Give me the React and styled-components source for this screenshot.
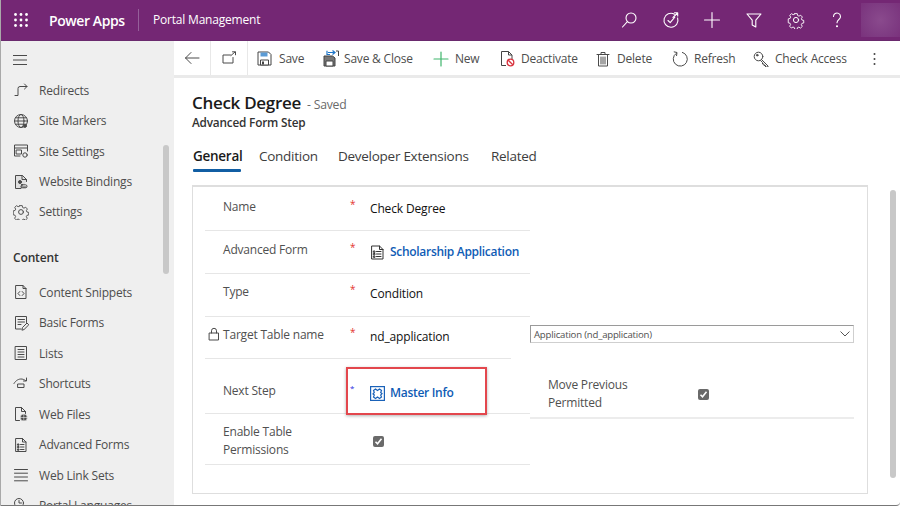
import React from "react";
import styled, { createGlobalStyle } from "styled-components";

const Global = createGlobalStyle`
  * { box-sizing: border-box; }
  html, body { margin: 0; padding: 0; background: #fff; overflow: hidden; }
  body { font-family: "Open Sans", "Liberation Sans", sans-serif; }
`;

const Page = styled.div`
  width: 900px; height: 506px; overflow: hidden; display: flex; flex-direction: column;
  border-left: 1px solid #a9a9a9; border-bottom: 1px solid #777; border-bottom-right-radius: 4px;
`;
const TopBar = styled.header`
  height: 41px; flex: none; background: #742774; color: #fff; display: flex; align-items: center;
  margin-left: -1px; border-bottom: 1px solid #6a2a6e;
`;
const Waffle = styled.div`width: 49px; padding-left: 14px; display: flex; align-items: center;`;
const Brand = styled.div`
  width: 89px; font-size: 14px; font-weight: 600; letter-spacing: -0.42px; white-space: nowrap;
`;
const AppName = styled.div`
  border-left: 1px solid #95609a; height: 22px; line-height: 22px; padding-left: 14px; font-size: 12px; letter-spacing: -0.2px;
  white-space: nowrap; flex: 1;
`;
const TopIcons = styled.div`display: flex; align-items: center;`;
const TopIcon = styled.div`width: 41.6px; height: 41px; display: flex; align-items: center; justify-content: center;`;
const Avatar = styled.div`
  width: 39px; height: 34px; margin-left: 3px;
  background: radial-gradient(circle at 50% 50%, #8a4a8d 0%, #7f3c83 60%, #7a327c 100%);
`;
const Body = styled.div`flex: 1; display: flex; min-height: 0;`;

const Sidebar = styled.nav`
  width: 173px; flex: none; background: #efefef; position: relative; overflow: hidden; padding-left: 12px;
`;
const Burger = styled.div`height: 34px; display: flex; align-items: center; padding-top: 4px;`;
const NavGroup = styled.div`padding-top: ${p => p.$top ?? 0}px;`;
const NavItem = styled.div`
  height: 30.45px; display: flex; align-items: center; gap: 10px; font-size: 12px; letter-spacing: -0.2px; color: #4d4d4d; white-space: nowrap;
`;
const NavIcon = styled.span`width: 16px; height: 16px; flex: none; display: flex;`;
const NavHead = styled.div`
  height: 31px; margin-top: 15px; display: flex; align-items: center; font-size: 12px; font-weight: 600; letter-spacing: -0.15px; color: #333;
`;
const Thumb = styled.div`
  position: absolute; left: 162px; top: 104px; width: 6px; height: 129px; border-radius: 3px; background: #c8c8c8;
`;

const Main = styled.main`flex: 1; min-width: 0; display: flex; flex-direction: column;`;
const Toolbar = styled.div`
  height: 37px; flex: none; border-bottom: 3px solid #eaeaea; display: flex; align-items: center; background: #fff; color: #4d4d4d; font-size: 12px; letter-spacing: -0.2px;
`;
const NavBtn = styled.div`
  width: ${p => p.$w}px; height: 34px; flex: none; display: flex; align-items: center; justify-content: center; border-right: 1px solid #e8e8e8;
`;
const ToolBtn = styled.div`
  width: ${p => p.$w}px; flex: none; display: flex; align-items: center; gap: ${p => p.$gap ?? 6}px; white-space: nowrap; padding-top: 1px;
`;
const Content = styled.div`flex: 1; min-height: 0; display: flex; position: relative;`;
const FormArea = styled.div`flex: 1; min-width: 0; padding: 12px 0 0 18px;`;
const Title = styled.div`display: flex; align-items: baseline; gap: 6px; height: 24px;`;
const TitleText = styled.h1`margin: 0; font-size: 17px; line-height: 25px; font-weight: 600; letter-spacing: -0.3px; color: #1a1a1a;`;
const Saved = styled.span`font-size: 12.2px; color: #6a6a6a; letter-spacing: -0.2px;`;
const SubTitle = styled.div`font-size: 11.8px; line-height: 16px; font-weight: 600; letter-spacing: -0.2px; color: #333;`;
const Tabs = styled.div`display: flex; margin-top: 16px; height: 39px; padding-left: 1px;`;
const Tab = styled.div`
  width: ${p => p.$w}px; font-size: 13.5px; line-height: 20px; letter-spacing: -0.27px; color: ${p => p.$active ? "#1a1a1a" : "#3d3d3d"}; font-weight: ${p => p.$active ? 600 : 400}; white-space: nowrap; position: relative;
  ${p => p.$active && `&::after { content: ""; position: absolute; left: 0; top: 23px; width: 48px; height: 3px; background: #115ea3; border-radius: 1px; }`}
`;
const Card = styled.section`
  width: 676px; height: 309px; border: 1px solid #dedede; border-top-width: 2px; padding: 0 12px; display: flex; background: #fff; position: relative;
`;
const LeftCol = styled.div`width: 325px; flex: none;`;
const RightCol = styled.div`flex: 1; padding-top: 138px;`;
const Row = styled.div`
  height: ${p => p.$h}px; width: ${p => p.$line ?? 325}px; border-bottom: 1px solid #e6e6e6; display: grid; grid-template-columns: 145px 20px 1fr; align-items: start; padding-top: ${p => p.$top}px; position: relative;
`;
const Label = styled.div`
  padding-left: 18px; font-size: 12px; line-height: 18px; letter-spacing: -0.2px; color: #505050;
`;
const Req = styled.div`
  font-size: ${p => p.$blue ? 8 : 10}px; line-height: 12px; color: ${p => p.$blue ? "#2a2ae0" : "#e3342f"};
`;
const Value = styled.div`
  font-size: 12px; line-height: 18px; margin-top: 2px; letter-spacing: -0.15px; color: #111; font-weight: 500; white-space: nowrap;
`;
const LinkValue = styled(Value)`display: flex; align-items: center; gap: 5px; color: #0f5cb5; font-weight: 600; letter-spacing: -0.3px;`;
const LockWrap = styled.span`position: absolute; left: 3px; top: 10px; display: flex;`;
const CheckBox = styled.span`
  width: 11px; height: 11px; display: flex; align-items: center; justify-content: center; background: #6a6a6a; border-radius: 2px; margin-top: ${p => p.$mt ?? 0}px; margin-left: ${p => p.$ml ?? 0}px;
`;
const Select = styled.div`
  height: 18px; width: 324px; border: 1px solid #cfcfcf; border-top-color: #9a9a9a; border-left-color: #9a9a9a; display: flex; align-items: center; justify-content: space-between; padding: 0 3px 0 3px; font-size: 9.6px; letter-spacing: -0.2px; color: #505050;
`;
const MoveRow = styled.div`
  margin-top: 33px; height: 43px; width: 324px; border-bottom: 2px solid #ececec; display: grid; grid-template-columns: 150px 1fr; padding-left: 18px; align-items: start; position: relative;
`;
const MoveLabel = styled(Label)`padding-left: 0;`;
const Highlight = styled.div`
  position: absolute; left: 141px; top: 8px; width: 141px; height: 48px; border: 2px solid #e3474d; box-shadow: 0 1px 3px rgba(0,0,0,.3); pointer-events: none;
`;
const Track = styled.div`width: 10px; flex: none; padding-top: 112px;`;
const Bar = styled.div`width: 6px; height: 288px; background: #c8c8c8; border-radius: 3px;`;

const Ic = ({ size = 16, w, h, vb, color = "#4a4a4a", sw = 1, children }) => (
  <svg width={w ?? size} height={h ?? size} viewBox={vb ?? `0 0 ${size} ${size}`} fill="none" stroke={color} strokeWidth={sw} strokeLinecap="round" strokeLinejoin="round">{children}</svg>
);

const WaffleIcon = () => (
  <svg width="14" height="14" viewBox="0 0 14 14" fill="#fff">
    {[1.5, 7, 12.5].flatMap(y => [1.5, 7, 12.5].map(x => <circle key={`${x}-${y}`} cx={x} cy={y} r="1.4" />))}
  </svg>
);

const T = "#fff";
const gearPath = "M6.6.9h2.8l.4 2.1 1.5.7 1.9-1 1.9 2-1.100 1.800.6 1.500 2 .5v2.800l-2 .4-.7 1.500 1.100 1.900-2 1.900-1.800-1.100-1.500.6-.5 2H6.600l-.4-2-1.500-.7-1.900 1.100-1.900-2 1.100-1.800-.6-1.500-2-.5V6.700l2-.4.7-1.500-1.100-1.900 2-1.900 1.800 1.100 1.500-.6z";
const topIcons = [
  <Ic size={18} color={T} key="s" sw={1.1}><circle cx="11" cy="7" r="5" /><path d="M7.4 10.6 2.5 16" /></Ic>,
  <Ic size={18} color={T} key="a" sw={1.1}><path d="M12.5 3.2A7 7 0 1 0 15.6 7" /><path d="M6 9.5l2.2 2.2 4.6-5.6" /><path d="M11 6.5 15.5 2M12.5 1.8h3.2V5" /></Ic>,
  <Ic size={18} color={T} key="p" sw={1.1}><path d="M9 1.5v15M1.5 9h15" /></Ic>,
  <Ic size={18} color={T} key="f" sw={1.1}><path d="M2 3h14l-5.2 6.2V16l-3.6-2V9.2z" /></Ic>,
  <Ic size={18} color={T} key="g" sw={1}><circle cx="9" cy="9" r="2.6" /><path d={gearPath} transform="translate(1.800 1.800) scale(.9)" /></Ic>,
  <Ic size={18} color={T} key="h" sw={1.1}><path d="M5.5 5.5a3.5 3.5 0 1 1 5.6 2.8C9.8 9.3 9 10 9 11.8" /><circle cx="9" cy="15.2" r=".5" fill="#fff" /></Ic>,
];

const nav = {
  redirect: <Ic><path d="M2 13.500h3V6.500a2 2 0 0 1 2-2h7" /><path d="M11.500 2l2.500 2.500L11.500 7" /></Ic>,
  globe: <Ic><circle cx="8" cy="8" r="6.500" /><ellipse cx="8" cy="8" rx="3" ry="6.500" /><path d="M1.500 8h13M2.500 4.800h11M2.500 11.200h11" /><circle cx="12" cy="13" r="1.400" fill="#4a4a4a" /></Ic>,
  site: <Ic><path d="M7 13H1.500V2h13v6" /><path d="M1.500 5h13M3.500 7h5v4h-5z" /><circle cx="12" cy="12" r="2.200" /></Ic>,
  bind: <Ic><path d="M8 14.500H2.500v-13h7l4 4v2" fill="#e0e0e0" /><path d="M9 1.500v4h4.500" /><circle cx="7" cy="8" r="1.500" fill="#4a4a4a" /><path d="M8 13h5M8.500 10.800h4a1.500 1.500 0 0 1 0 3h-3a1.500 1.500 0 0 1 0-3z" /></Ic>,
  gear: <Ic><circle cx="8" cy="8" r="2.400" /><path d={gearPath} transform="translate(.8 .8) scale(.9)" /></Ic>,
  snippet: <Ic><path d="M3 1.500h7l3 3v10H3z" /><path d="M10 1.500v3h3M6.800 7.500 5 9.500l1.800 2M9.200 7.500l1.800 2-1.800 2" /></Ic>,
  basic: <Ic><path d="M8 14H2.500V1.500h11v6" /><path d="M5 4.500h6.500M5 7h6.500M5 9.500h3" /><path d="M9 14.800l.5-2.300 4.500-4.500 1.800 1.800-4.500 4.500z" /></Ic>,
  list: <Ic><rect x="2.500" y="1.500" width="11" height="13" /><path d="M5 4.500h6M5 7h6M5 9.500h6M5 12h6" /></Ic>,
  shortcut: <Ic><path d="M1 7.500C3 4 6 3 8 3c1.500 0 3 .4 4.500 1.500" /><path d="M13.500 2v3h-3" /><rect x="5" y="8" width="6" height="3.500" /></Ic>,
  webfile: <Ic><path d="M6.500 14.500h-4v-13h6l4 4v2" /><path d="M8.500 1.500v4h4" /><circle cx="10.800" cy="11.500" r="3.500" fill="#4a4a4a" stroke="#efefef" strokeWidth=".6" /><path d="M7.500 11.500h6.500M10.800 8v7" stroke="#efefef" strokeWidth=".6" /></Ic>,
  advanced: <Ic><path d="M3 1.500h6.500l3.500 3.500v9.500H3z" /><path d="M9.500 1.500V5H13" /><path d="M7.500 7.500h3.500M7.500 10h3.500M7.500 12.500h3.500" /><path d="M4.800 7h1.200v1.200H4.800zM4.800 9.500h1.200v1.200H4.800zM4.800 12h1.200v1.200H4.800z" fill="#4a4a4a" /></Ic>,
  links: <Ic><path d="M1.500 2.500h13M1.500 6.200h13M1.500 10h13M1.500 13.800h13" /></Ic>,
  lang: <Ic><circle cx="6" cy="6" r="4.500" /><path d="M6 3.500V6h2.500" /><path d="M9 12.500h5v2H9z" /></Ic>,
};

const NavRow = ({ icon, children }) => (
  <NavItem><NavIcon>{icon}</NavIcon>{children}</NavItem>
);

const ToolIcons = {
  back: <Ic><path d="M15 8H1.500M7 2.500 1.500 8 7 13.500" /></Ic>,
  popout: <Ic><path d="M12 7.500V13H2V5h7.500" /><path d="M10 5.500 14 2M11.500 1.800H14.500v3" /></Ic>,
  save: <svg width="15" height="15" viewBox="0 0 15 15"><path d="M1 1h10.500L14 3.500V14H1z" fill="#fff" stroke="#444" /><path d="M3.500 1.500h7v4h-7z" fill="#5b9bd5" /><path d="M3.500 9h8v5h-8z" fill="#fff" stroke="#444" /><path d="M5 10.500h2v3H5z" fill="#444" /></svg>,
  saveClose: <svg width="16" height="17" viewBox="0 0 16 17"><path d="M1 6h8.500L12 8v8H1z" fill="#777" stroke="#444" /><path d="M3 11h7v5H3z" fill="#fff" stroke="#444" /><path d="M5 2.500H12M9.500.500 12 2.500 9.500 4.500M7 4.500h-3V.800" fill="none" stroke="#1f77c9" strokeWidth="1.200" /><path d="M13 1h2.500v5" fill="none" stroke="#444" /></svg>,
  plus: <Ic color="#3fb56c" sw={1.2}><path d="M8 1v14M1 8h14" /></Ic>,
  deactivate: <svg width="15" height="17" viewBox="0 0 15 17" fill="none"><path d="M6 15.500H1.500v-14h7l3.500 3.500v4" stroke="#444" /><path d="M8.500 1.500V5H12" stroke="#444" /><circle cx="10.500" cy="12.500" r="3.300" stroke="#d9343f" strokeWidth="1.300" /><path d="M8.300 10.300l4.500 4.500" stroke="#d9343f" strokeWidth="1.300" /></svg>,
  trash: <Ic><path d="M3.500 4v11h9V4M2 3.500h12M6 3V1.500h4V3M6 6v7M8 6v7M10 6v7" /></Ic>,
  refresh: <svg width="16" height="16" viewBox="0 0 16 16" fill="none" stroke="#4a4a4a"><path d="M4.500 2.200A7 7 0 1 0 10 1.300" /><path d="M1.800.800 5 1.500 4.500 5" /></svg>,
  key: <Ic><circle cx="5.500" cy="5.500" r="4.300" /><circle cx="4.200" cy="4.200" r=".8" fill="#4a4a4a" /><path d="M8.500 8.500l6.500 6.500V16h-2.500v-1.500h-1.500V13H9.500V11.500L7.600 9.500" /></Ic>,
  more: <svg width="3" height="14" viewBox="0 0 3 14" fill="#444"><circle cx="1.500" cy="2" r="1" /><circle cx="1.500" cy="7" r="1" /><circle cx="1.500" cy="12" r="1" /></svg>,
};

const Check = () => <svg width="9" height="9" viewBox="0 0 9 9" fill="none" stroke="#fff" strokeWidth="1.600"><path d="M1.500 4.800l2 2 4-5" /></svg>;

export default function App() {
  return (
    <>
      <Global />
      <Page>
        <TopBar>
          <Waffle><WaffleIcon /></Waffle>
          <Brand>Power Apps</Brand>
          <AppName>Portal Management</AppName>
          <TopIcons>
            {topIcons.map((ic, i) => <TopIcon key={i}>{ic}</TopIcon>)}
            <Avatar />
          </TopIcons>
        </TopBar>
        <Body>
          <Sidebar>
            <Burger>
              <Ic w={14} h={14} vb="0 0 14 14"><path d="M0 2.500h14M0 7h14M0 11.500h14" /></Ic>
            </Burger>
            <NavGroup>
              <NavRow icon={nav.redirect}>Redirects</NavRow>
              <NavRow icon={nav.globe}>Site Markers</NavRow>
              <NavRow icon={nav.site}>Site Settings</NavRow>
              <NavRow icon={nav.bind}>Website Bindings</NavRow>
              <NavRow icon={nav.gear}>Settings</NavRow>
            </NavGroup>
            <NavHead>Content</NavHead>
            <NavGroup $top={4}>
              <NavRow icon={nav.snippet}>Content Snippets</NavRow>
              <NavRow icon={nav.basic}>Basic Forms</NavRow>
              <NavRow icon={nav.list}>Lists</NavRow>
              <NavRow icon={nav.shortcut}>Shortcuts</NavRow>
              <NavRow icon={nav.webfile}>Web Files</NavRow>
              <NavRow icon={nav.advanced}>Advanced Forms</NavRow>
              <NavRow icon={nav.links}>Web Link Sets</NavRow>
              <NavRow icon={nav.lang}>Portal Languages</NavRow>
            </NavGroup>
            <Thumb />
          </Sidebar>
          <Main>
            <Toolbar>
              <NavBtn $w={37}>{ToolIcons.back}</NavBtn>
              <NavBtn $w={37}>{ToolIcons.popout}</NavBtn>
              <ToolBtn $w={9} />
              <ToolBtn $w={66} $gap={7}>{ToolIcons.save}Save</ToolBtn>
              <ToolBtn $w={110} $gap={5}>{ToolIcons.saveClose}Save &amp; Close</ToolBtn>
              <ToolBtn $w={67} $gap={6}>{ToolIcons.plus}New</ToolBtn>
              <ToolBtn $w={95} $gap={6}>{ToolIcons.deactivate}Deactivate</ToolBtn>
              <ToolBtn $w={77} $gap={6}>{ToolIcons.trash}Delete</ToolBtn>
              <ToolBtn $w={81} $gap={6}>{ToolIcons.refresh}Refresh</ToolBtn>
              <ToolBtn $w={120} $gap={6}>{ToolIcons.key}Check Access</ToolBtn>
              <ToolBtn $w={10}>{ToolIcons.more}</ToolBtn>
            </Toolbar>
            <Content>
              <FormArea>
                <Title><TitleText>Check Degree</TitleText><Saved>- Saved</Saved></Title>
                <SubTitle>Advanced Form Step</SubTitle>
                <Tabs>
                  <Tab $w={66} $active>General</Tab>
                  <Tab $w={79}>Condition</Tab>
                  <Tab $w={153}>Developer Extensions</Tab>
                  <Tab $w={60}>Related</Tab>
                </Tabs>
                <Card>
                  <LeftCol>
                    <Row $h={44} $top={11}>
                      <Label>Name</Label><Req>*</Req><Value>Check Degree</Value>
                    </Row>
                    <Row $h={43} $top={10}>
                      <Label>Advanced Form</Label><Req>*</Req>
                      <LinkValue>
                        <Ic w={15} h={15} vb="0 0 14 15" color="#333"><path d="M1.500 1h7.500l3.500 3.500V14h-11z" /><path d="M9 1v3.500h3.500" /><path d="M6 6.500h4.500M6 9h4.500M6 11.500h4.500M3.200 6h1.300v1.300H3.200zM3.200 8.500h1.300v1.300H3.200zM3.200 11h1.300v1.300H3.200z" /></Ic>
                        Scholarship Application
                      </LinkValue>
                    </Row>
                    <Row $h={43} $top={9}>
                      <Label>Type</Label><Req>*</Req><Value>Condition</Value>
                    </Row>
                    <Row $h={42} $top={9} $line={306}>
                      <LockWrap>
                        <Ic w={12} h={14} vb="0 0 12 14"><rect x="1.500" y="6" width="9" height="7" /><path d="M3.500 6V3.800a2.500 2.500 0 0 1 5 0V6" /></Ic>
                      </LockWrap>
                      <Label>Target Table name</Label><Req>*</Req><Value>nd_application</Value>
                    </Row>
                    <Row $h={55} $top={23}>
                      <Label>Next Step</Label><Req $blue>*</Req>
                      <LinkValue>
                        <svg width="15" height="15" viewBox="0 0 15 15" fill="none" stroke="#1a62b8" strokeWidth="1.200"><rect x=".6" y=".6" width="13.800" height="13.800" /><path d="M3.500 4.500 5.500 3l2 1.500L9.500 3l2 1.500-.8 2 1.300 1-1.300 1.500.8 2-2 1.500-2-1.500-2 1.500-2-1.500.8-2L3 8l1.300-1.500z" /></svg>
                        Master Info
                      </LinkValue>
                      <Highlight />
                    </Row>
                    <Row $h={51} $top={9}>
                      <Label>Enable Table<br />Permissions</Label><span />
                      <CheckBox $mt={13} $ml={3}><Check /></CheckBox>
                    </Row>
                  </LeftCol>
                  <RightCol>
                    <Select>
                      Application (nd_application)
                      <Ic w={10} h={6} vb="0 0 10 6" color="#555"><path d="M.800.800 5 5 9.200.800" /></Ic>
                    </Select>
                    <MoveRow>
                      <MoveLabel>Move Previous<br />Permitted</MoveLabel>
                      <CheckBox $mt={13}><Check /></CheckBox>
                    </MoveRow>
                  </RightCol>
                </Card>
              </FormArea>
              <Track><Bar /></Track>
            </Content>
          </Main>
        </Body>
      </Page>
    </>
  );
}
